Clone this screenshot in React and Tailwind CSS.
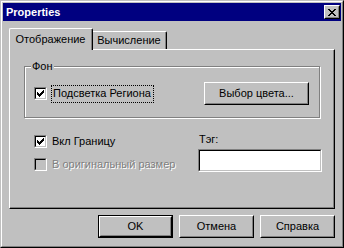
import React from 'react';

const CHECK = ['......#', '.....##', '#...###', '##.###.', '#####..', '.###...', '..#....'];
const CLOSE = ['##....##', '.##..##.', '..####..', '...##...', '..####..', '.##..##.', '##....##'];

// pixel glyph, like the old bitmap icons
const Pixels = ({ rows, color = '#000', className = '' }) => {
  let d = '';
  rows.forEach((row, y) => {
    row.split('').forEach((c, x) => {
      if (c === '#') d += `M${x} ${y}h1v1h-1z`;
    });
  });
  const w = rows[0].length;
  const h = rows.length;
  return (
    <svg width={w} height={h} viewBox={`0 0 ${w} ${h}`} className={`block shrink-0 ${className}`} shapeRendering="crispEdges">
      <path d={d} fill={color} />
    </svg>
  );
};

const Raised = ({ className = '', children }) => (
  <div className={`border border-t-white border-l-white border-r-black border-b-black ${className}`}>
    <div className="h-full w-full border border-t-[#c0c0c0] border-l-[#c0c0c0] border-r-[#808080] border-b-[#808080] flex items-center justify-center">
      {children}
    </div>
  </div>
);

const Button = ({ children, isDefault }) =>
  isDefault ? (
    <div className="border border-black">
      <Raised className="w-[73px] h-[21px]">{children}</Raised>
    </div>
  ) : (
    <Raised className="w-[75px] h-[23px]">{children}</Raised>
  );

const Sunken = ({ className = '', inner = 'bg-white', children }) => (
  <div className={`border border-t-[#808080] border-l-[#808080] border-r-white border-b-white ${className}`}>
    <div className={`h-full w-full border border-t-black border-l-black border-r-[#c0c0c0] border-b-[#c0c0c0] ${inner}`}>
      {children}
    </div>
  </div>
);

const Checkbox = ({ checked, disabled }) => (
  <Sunken className="w-[13px] h-[13px] shrink-0" inner={disabled ? 'bg-[#c0c0c0]' : 'bg-white'}>
    {checked && <Pixels rows={CHECK} className="ml-[1px] mt-[1px]" />}
  </Sunken>
);

export default function App() {
  return (
    <div className="w-[344px] h-[248px] bg-[#c0c0c0] border border-t-[#c0c0c0] border-l-[#c0c0c0] border-r-black border-b-black font-['Liberation_Sans',Arial,sans-serif] text-[11px] leading-[13px] text-black select-none">
      <div className="h-full border border-t-white border-l-white border-r-[#808080] border-b-[#808080] p-[1px]">
        {/* title bar */}
        <div className="h-[18px] bg-[#000080] flex items-center pl-[3px] pr-[1px]">
          <span className="font-bold text-white">Properties</span>
          <Raised className="ml-auto w-[16px] h-[14px] shrink-0 bg-[#c0c0c0]">
            <Pixels rows={CLOSE} />
          </Raised>
        </div>

        <div className="px-[6px] pt-[7px]">
          {/* tabs */}
          <div className="flex items-end h-[21px]">
            <div className="relative z-10 -mb-[1px] w-[84px] h-[22px] bg-[#c0c0c0] border-t border-l border-r border-t-white border-l-white border-r-black rounded-t-[2px] flex">
              <div className="flex-1 border-r border-r-[#808080] flex items-center justify-center pb-[1px]">Отображение</div>
            </div>
            <div className="w-[74px] h-[18px] border-t border-r border-t-white border-r-black rounded-tr-[2px] flex">
              <div className="flex-1 border-r border-r-[#808080] flex items-center justify-center">Вычисление</div>
            </div>
          </div>

          {/* panel */}
          <div className="h-[160px] border border-t-white border-l-white border-r-black border-b-black">
            <div className="h-full border-r border-b border-r-[#808080] border-b-[#808080] pl-[14px] pt-[16px]">
              <div className="relative w-[296px] h-[52px] border border-[#808080] shadow-[inset_1px_1px_#fff,1px_1px_#fff]">
                <span className="absolute left-[6px] -top-[7px] px-[1px] bg-[#c0c0c0]">Фон</span>
                <div className="flex items-center pl-[9px] pr-[10px] pt-[15px]">
                  <Checkbox checked />
                  <span className="ml-[4px] w-[103px] h-[18px] pl-[1px] border border-dotted border-black flex items-center">Подсветка Региона</span>
                  <Raised className="ml-auto w-[105px] h-[23px]">Выбор цвета...</Raised>
                </div>
              </div>

              <div className="flex pl-[10px] pt-[15px]">
                <div className="w-[164px] pt-[2px] flex flex-col gap-[10px]">
                  <div className="flex items-center h-[13px]">
                    <Checkbox checked />
                    <span className="ml-[5px]">Вкл Границу</span>
                  </div>
                  <div className="flex items-center h-[13px]">
                    <Checkbox disabled />
                    <span className="ml-[5px] text-[#808080] [text-shadow:1px_1px_#fff]">В оригинальный размер</span>
                  </div>
                </div>
                <div className="flex flex-col">
                  <span className="pl-[1px]">Тэг:</span>
                  <Sunken className="mt-[3px] w-[124px] h-[23px]" />
                </div>
              </div>
            </div>
          </div>

          {/* dialog buttons */}
          <div className="flex justify-end gap-[6px] mt-[6px]">
            <Button isDefault>OK</Button>
            <Button>Отмена</Button>
            <Button>Справка</Button>
          </div>
        </div>
      </div>
    </div>
  );
}
